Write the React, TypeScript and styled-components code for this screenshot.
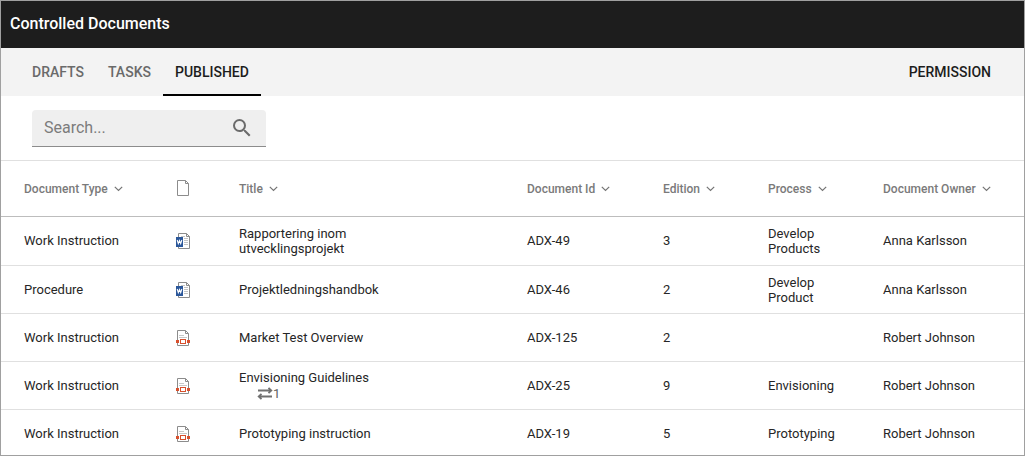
import React from "react";
import styled, { createGlobalStyle } from "styled-components";

const GlobalStyle = createGlobalStyle`
  *, *::before, *::after { box-sizing: border-box; }
  body {
    margin: 0;
    background: #fff;
    color: #262626;
    font-family: Roboto, "Liberation Sans", sans-serif;
    font-size: 13px;
    line-height: 15px;
  }
  button, input { font: inherit; color: inherit; }
`;

const Page = styled.main`
  border: 1px solid #a0a0a0;
  min-height: 100vh;
`;

const TitleBar = styled.header`
  display: flex;
  align-items: center;
  height: 47px;
  padding: 0 9px 2px;
  background: #1d1d1d;
  color: #fff;
`;

const Heading = styled.h1`
  margin: 0;
  font-size: 16px;
  line-height: 20px;
  font-weight: 500;
`;

const TabBar = styled.nav`
  display: flex;
  justify-content: space-between;
  height: 48px;
  padding: 0 21px 0 19px;
  background: #f3f3f3;
`;

const TabGroup = styled.div`
  display: flex;
`;

const Tab = styled.button<{ $active?: boolean; $strong?: boolean }>`
  height: 48px;
  padding: 2px 12px 0;
  border: 0;
  border-bottom: 2px solid ${(p) => (p.$active ? "#000" : "transparent")};
  background: none;
  color: ${(p) => (p.$active || p.$strong ? "#1d1d1d" : "#6a6a6a")};
  font-size: 14px;
  font-weight: 500;
  text-transform: uppercase;
  cursor: pointer;
`;

const Toolbar = styled.div`
  padding: 14px 31px 13px;
  border-bottom: 1px solid #e0e0e0;
`;

const SearchField = styled.label`
  display: flex;
  align-items: center;
  width: 234px;
  height: 37px;
  padding: 0 12px;
  border-bottom: 1px solid #8c8c8c;
  border-radius: 4px 4px 0 0;
  background: #efefef;
  color: #6b6b6b;
`;

const SearchInput = styled.input`
  flex: 1;
  min-width: 0;
  padding: 0;
  border: 0;
  outline: 0;
  background: none;
  font-size: 16px;
  line-height: 20px;
  &::placeholder { color: #7c7c7c; opacity: 1; }
`;

const Table = styled.table`
  width: 100%;
  border-collapse: separate;
  border-spacing: 0;
  table-layout: fixed;
`;

const Col = styled.col<{ $width?: number }>`
  width: ${(p) => (p.$width ? `${p.$width}px` : "auto")};
`;

const HeadCell = styled.th`
  height: 56px;
  padding: 2px 0 0;
  border-bottom: 1px solid #bdbdbd;
  text-align: left;
  color: #7a7a7a;
  font-size: 12px;
  font-weight: 500;
  &:first-child { padding-left: 23px; }
  > svg { display: block; margin-bottom: 3px; }
`;

const SortButton = styled.button`
  display: inline-flex;
  align-items: center;
  gap: 6px;
  padding: 0;
  border: 0;
  background: none;
  white-space: nowrap;
  cursor: pointer;
  svg { margin-bottom: 1px; }
`;

const Cell = styled.td`
  height: 48px;
  padding: 0 32px 0 0;
  border-bottom: 1px solid #e0e0e0;
  vertical-align: middle;
  &:first-child { padding-left: 23px; }
  &:last-child { padding-right: 0; }
  svg { display: block; }
`;

const Row = styled.tr`
  &:first-child ${Cell} {
    height: 49px;
    padding-bottom: 1px;
  }
  &:last-child ${Cell} {
    height: 45px;
    padding-top: 2px;
    border-bottom: 0;
  }
`;

const DocTitle = styled.div`
  max-width: 160px;
`;

const Relations = styled.div`
  display: flex;
  align-items: center;
  height: 17px;
  padding-left: 18px;
  color: #616161;
`;

const FileIcon = () => (
  <svg width="15" height="16" viewBox="0 0 15 16" role="img" aria-label="File type">
    <path d="M1.5 .5H9.5L12.5 3.5V15.5H1.5Z" fill="#fff" stroke="#8c8c8c" />
    <path d="M9.5 .5V3.5H12.5" fill="none" stroke="#8c8c8c" />
  </svg>
);

const WordIcon = () => (
  <svg width="15" height="16" viewBox="0 0 15 16" role="img" aria-label="Word document">
    <path d="M2.5 .5H10.5L13.5 3.5V15.5H2.5Z" fill="#fff" stroke="#8c8c8c" />
    <path d="M10.5 .5V3.5H13.5" fill="none" stroke="#8c8c8c" />
    <path d="M5 3.5H9M8 5.5H12M8 7.5H12M8 9.5H12M8 11.5H12" stroke="#c4c4c4" />
    <rect y="4" width="7" height="10" fill="#2b579a" />
    <path d="M1.2 7L2.3 10.6L3.5 7.6L4.7 10.6L5.8 7" fill="none" stroke="#fff" strokeWidth="1.1" />
  </svg>
);

const FormIcon = () => (
  <svg width="15" height="16" viewBox="0 0 15 16" role="img" aria-label="Published document">
    <path d="M1.5 .5H9.5L12.5 3.5V15.5H1.5Z" fill="#fff" stroke="#8c8c8c" />
    <path d="M9.5 .5V3.5H12.5" fill="none" stroke="#8c8c8c" />
    <path d="M3 5.5H8M3 7.5H11" stroke="#c8c8c8" />
    <rect x="4.5" y="9.5" width="5" height="4" fill="#fff" stroke="#d8502d" />
    <path d="M0 10H3V13H0ZM11 10H14V13H11Z" fill="#d8502d" />
  </svg>
);

const Chevron = () => (
  <svg width="9" height="6" viewBox="0 0 9 6" aria-hidden="true">
    <path d="M.8 .8L4.5 4.5L8.2 .8" fill="none" stroke="#757575" strokeWidth="1.2" />
  </svg>
);

const SearchIcon = () => (
  <svg width="24" height="24" viewBox="0 0 24 24" aria-hidden="true">
    <path
      fill="currentColor"
      d="M15.5 14h-.79l-.28-.27A6.47 6.47 0 0 0 16 9.5 6.5 6.5 0 1 0 9.5 16c1.61 0 3.09-.59 4.23-1.57l.27.28v.79l5 4.99L20.49 19l-4.99-5zm-6 0C7.01 14 5 11.99 5 9.5S7.01 5 9.5 5 14 7.01 14 9.5 11.99 14 9.5 14z"
    />
  </svg>
);

const SwapIcon = () => (
  <svg width="16" height="13" viewBox="0 0 16 13" role="img" aria-label="Related documents">
    <path
      d="M1 3.5H14M11.5 .8L14.3 3.5L11.5 6.2M15 9.5H2M4.5 6.8L1.7 9.5L4.5 12.2"
      fill="none"
      stroke="#707070"
      strokeWidth="1.8"
    />
  </svg>
);

type Doc = {
  type: string;
  format: "word" | "form";
  title: string;
  related?: number;
  id: string;
  edition: number;
  process: string;
  owner: string;
};

const docs: Doc[] = [
  { type: "Work Instruction", format: "word", title: "Rapportering inom utvecklingsprojekt", id: "ADX-49", edition: 3, process: "Develop Products", owner: "Anna Karlsson" },
  { type: "Procedure", format: "word", title: "Projektledningshandbok", id: "ADX-46", edition: 2, process: "Develop Product", owner: "Anna Karlsson" },
  { type: "Work Instruction", format: "form", title: "Market Test Overview", id: "ADX-125", edition: 2, process: "", owner: "Robert Johnson" },
  { type: "Work Instruction", format: "form", title: "Envisioning Guidelines", related: 1, id: "ADX-25", edition: 9, process: "Envisioning", owner: "Robert Johnson" },
  { type: "Work Instruction", format: "form", title: "Prototyping instruction", id: "ADX-19", edition: 5, process: "Prototyping", owner: "Robert Johnson" },
];

const columns: { label?: string; width?: number }[] = [
  { label: "Document Type", width: 175 },
  { width: 63 },
  { label: "Title" },
  { label: "Document Id", width: 136 },
  { label: "Edition", width: 105 },
  { label: "Process", width: 115 },
  { label: "Document Owner", width: 141 },
];

export default function App() {
  return (
    <>
      <GlobalStyle />
      <Page>
        <TitleBar>
          <Heading>Controlled Documents</Heading>
        </TitleBar>
        <TabBar>
          <TabGroup>
            <Tab>Drafts</Tab>
            <Tab>Tasks</Tab>
            <Tab $active aria-current="page">Published</Tab>
          </TabGroup>
          <Tab $strong>Permission</Tab>
        </TabBar>
        <Toolbar>
          <SearchField>
            <SearchInput type="text" placeholder="Search..." aria-label="Search" />
            <SearchIcon />
          </SearchField>
        </Toolbar>
        <Table>
          <colgroup>
            {columns.map((c, i) => (
              <Col key={i} $width={c.width} />
            ))}
          </colgroup>
          <thead>
            <tr>
              {columns.map((c, i) => (
                <HeadCell key={i} scope="col">
                  {c.label ? (
                    <SortButton>
                      {c.label}
                      <Chevron />
                    </SortButton>
                  ) : (
                    <FileIcon />
                  )}
                </HeadCell>
              ))}
            </tr>
          </thead>
          <tbody>
            {docs.map((d) => (
              <Row key={d.id}>
                <Cell>{d.type}</Cell>
                <Cell>{d.format === "word" ? <WordIcon /> : <FormIcon />}</Cell>
                <Cell>
                  <DocTitle>{d.title}</DocTitle>
                  {d.related && (
                    <Relations>
                      <SwapIcon />
                      {d.related}
                    </Relations>
                  )}
                </Cell>
                <Cell>{d.id}</Cell>
                <Cell>{d.edition}</Cell>
                <Cell>{d.process}</Cell>
                <Cell>{d.owner}</Cell>
              </Row>
            ))}
          </tbody>
        </Table>
      </Page>
    </>
  );
}
